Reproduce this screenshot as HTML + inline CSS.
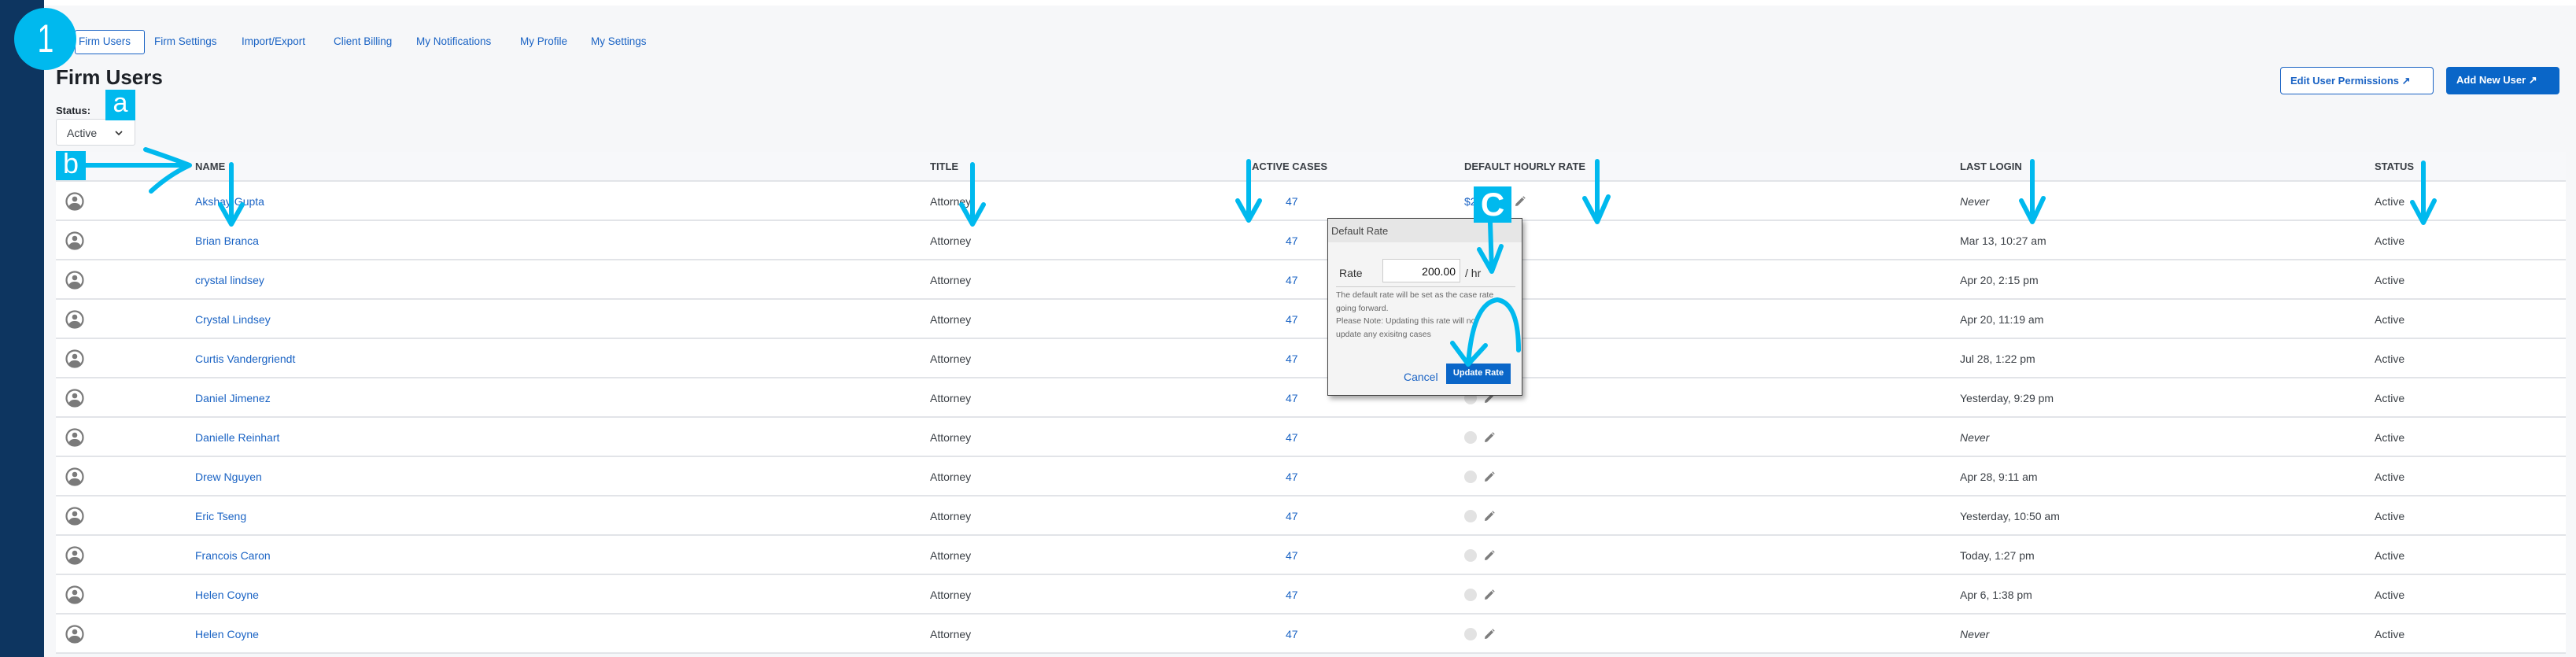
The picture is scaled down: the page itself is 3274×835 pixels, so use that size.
<!DOCTYPE html>
<html><head><meta charset="utf-8"><style>
*{margin:0;padding:0;box-sizing:border-box}
body{width:3274px;height:835px;background:#f6f7f9;font-family:"Liberation Sans",Arial,sans-serif;position:relative;overflow:hidden;color:#3a3f45}
.abs{position:absolute;white-space:nowrap}
.nav{top:45px;font-size:13.5px;color:#1a63c4}
.row{position:absolute;left:71px;width:3190px;height:50px;background:#fff;border-bottom:2px solid #e2e4e8}
.row .t{position:absolute;top:17px;font-size:14px;color:#3a3f45;white-space:nowrap}
.lnk{color:#1a63c4!important}
.hd{position:absolute;top:204px;font-size:13px;font-weight:bold;color:#3a3f45}
</style></head><body>
<div class="abs" style="left:0;top:0;width:3274px;height:7px;background:#fff"></div>
<div class="abs" style="left:0;top:0;width:56px;height:835px;background:#0d3560"></div>

<div class="abs" style="left:95px;top:38px;width:89px;height:31px;border:1px solid #1a63c4;border-radius:3px;background:#fff"></div>
<div class="abs nav" style="left:100px">Firm Users</div>
<div class="abs nav" style="left:196px">Firm Settings</div>
<div class="abs nav" style="left:307px">Import/Export</div>
<div class="abs nav" style="left:424px">Client Billing</div>
<div class="abs nav" style="left:529px">My Notifications</div>
<div class="abs nav" style="left:661px">My Profile</div>
<div class="abs nav" style="left:751px">My Settings</div>

<div class="abs" style="left:18px;top:10px;width:79px;height:79px;border-radius:50%;background:#00b9ee;color:#fff;font-size:50px;text-align:center;line-height:79px"><span style="display:inline-block;transform:scaleX(0.75)">1</span></div>

<div class="abs" style="left:71px;top:83px;font-size:26px;font-weight:bold;color:#1d2127">Firm Users</div>
<div class="abs" style="left:71px;top:133px;font-size:13px;font-weight:bold;color:#1d2127">Status:</div>
<div class="abs" style="left:71px;top:151px;width:101px;height:34px;border:1px solid #d6d9dd;border-radius:3px;background:#fff;font-size:14px;padding:9px 0 0 13px">Active<svg style="position:absolute;left:74px;top:13px" width="10" height="8" viewBox="0 0 10 8"><path d="M1 2 L5 6 L9 2" fill="none" stroke="#333" stroke-width="1.6"/></svg></div>
<div class="abs" style="left:134px;top:114px;width:38px;height:39px;background:#00b9ee;color:#fff;font-size:34px;text-align:center;line-height:34px">a</div>

<div class="abs" style="left:2898px;top:85px;width:195px;height:35px;border:1px solid #1a63c4;border-radius:4px;background:#fff;color:#1a63c4;font-size:13px;font-weight:bold;padding:9px 0 0 12px">Edit User Permissions &#8599;</div>
<div class="abs" style="left:3109px;top:85px;width:144px;height:35px;border-radius:4px;background:#0a66c8;color:#fff;font-size:13px;font-weight:bold;padding:9px 0 0 13px">Add New User &#8599;</div>

<div class="abs" style="left:71px;top:193px;width:3190px;height:38px;background:#f7f8fa;border-bottom:2px solid #e2e4e8"></div>
<div class="hd" style="left:248px">NAME</div>
<div class="hd" style="left:1182px">TITLE</div>
<div class="hd" style="left:1591px">ACTIVE CASES</div>
<div class="hd" style="left:1861px">DEFAULT HOURLY RATE</div>
<div class="hd" style="left:2491px">LAST LOGIN</div>
<div class="hd" style="left:3018px">STATUS</div>

<div id="rows"></div>
<script>
var d=[["Akshay Gupta","Never"],["Brian Branca","Mar 13, 10:27 am"],["crystal lindsey","Apr 20, 2:15 pm"],["Crystal Lindsey","Apr 20, 11:19 am"],["Curtis Vandergriendt","Jul 28, 1:22 pm"],["Daniel Jimenez","Yesterday, 9:29 pm"],["Danielle Reinhart","Never"],["Drew Nguyen","Apr 28, 9:11 am"],["Eric Tseng","Yesterday, 10:50 am"],["Francois Caron","Today, 1:27 pm"],["Helen Coyne","Apr 6, 1:38 pm"],["Helen Coyne","Never"]];
var h="";
var av='<svg style="position:absolute;left:12px;top:13px" width="24" height="24" viewBox="0 0 24 24"><circle cx="12" cy="12" r="10.5" fill="none" stroke="#7a7a7a" stroke-width="2.2"/><circle cx="12" cy="9" r="3.3" fill="#7a7a7a"/><path d="M4.5 18 Q7 13.5 12 14 Q17 13.5 19.5 18 Q16 22 12 22 Q8 22 4.5 18Z" fill="#7a7a7a"/></svg>';
var pen='<svg width="14" height="14" viewBox="0 0 14 14"><path d="M1 13 L1.5 10 L9.5 2 L12 4.5 L4 12.5Z M10.3 1.2 L11.2 0.3 L13.7 2.8 L12.8 3.7Z" fill="#7d7d7d"/></svg>';
d.forEach(function(r,i){
 var ll=r[1]=="Never"?'<i>Never</i>':r[1];
 var rate=i==0?'<span class="t lnk" style="left:1790px">$200.00</span><span style="position:absolute;left:1854px;top:18px">'+pen+'</span>':'<span style="position:absolute;left:1790px;top:17px;width:16px;height:16px;border-radius:50%;background:#e2e2e2"></span><span style="position:absolute;left:1815px;top:18px">'+pen+'</span>';
 h+='<div class="row" style="top:'+(231+i*50)+'px">'+av+'<span class="t lnk" style="left:177px">'+r[0]+'</span><span class="t" style="left:1111px">Attorney</span><span class="t lnk" style="left:1563px">47</span>'+rate+'<span class="t" style="left:2420px">'+ll+'</span><span class="t" style="left:2947px">Active</span></div>';
});
document.getElementById("rows").innerHTML=h;
</script>

<div class="abs" style="left:1687px;top:277px;width:248px;height:226px;background:#f4f4f4;border:1px solid #444;box-shadow:3px 4px 6px rgba(0,0,0,.35)">
 <div style="height:30px;background:#e6e6e6;font-size:13px;padding:8px 0 0 4px;color:#444">Default Rate</div>
 <div class="abs" style="left:14px;top:61px;font-size:14px;color:#333">Rate</div>
 <div class="abs" style="left:69px;top:51px;width:99px;height:30px;background:#fff;border:1px solid #ccc;font-size:14px;text-align:right;padding:7px 5px 0 0;color:#111">200.00</div>
 <div class="abs" style="left:174px;top:61px;font-size:14px;color:#333">/ hr</div>
 <div class="abs" style="left:10px;top:86px;width:228px;height:1px;background:#ccc"></div>
 <div class="abs" style="left:10px;top:89px;font-size:10.5px;line-height:16.7px;color:#666">The default rate will be set as the case rate<br>going forward.<br>Please Note: Updating this rate will not<br>update any exisitng cases</div>
 <div class="abs" style="left:96px;top:193px;font-size:14px;color:#1a63c4">Cancel</div>
 <div class="abs" style="left:150px;top:184px;width:82px;height:26px;background:#0a66c8;color:#fff;font-size:11px;font-weight:bold;text-align:center;line-height:24px">Update Rate</div>
</div>

<div class="abs" style="left:71px;top:192px;width:38px;height:37px;background:#00b9ee;color:#fff;font-size:36px;text-align:center;line-height:32px">b</div>
<div class="abs" style="left:1873px;top:237px;width:48px;height:46px;background:#00b9ee;color:#fff;font-size:42px;font-weight:bold;text-align:center;line-height:46px">C</div>

<svg class="abs" style="left:0;top:0" width="3274" height="835" fill="none" stroke="#00b9ee" stroke-width="6" stroke-linecap="round" stroke-linejoin="round">
 <path d="M109 210 L236 210 M185 190 Q215 200 241 210 Q215 222 192 243"/>
 <path d="M294 209 L294 285 M280 260 L294 285 L308 260"/>
 <path d="M1236 209 L1236 285 M1222 260 L1236 285 L1250 260"/>
 <path d="M1587 205 L1587 280 M1573 255 L1587 280 L1601 255"/>
 <path d="M2030 205 L2030 282 M2014 252 L2030 282 L2044 250"/>
 <path d="M2583 205 L2583 282 M2569 255 L2583 282 L2597 252"/>
 <path d="M3080 207 L3080 283 M3066 257 L3080 283 L3094 255"/>
 <path d="M1894 283 L1896 345 M1880 317 L1896 345 L1908 313"/>
 <path d="M1930 445 Q1930 385 1903 381 Q1872 385 1866 463 M1846 436 L1866 463 L1888 439"/>
</svg>
</body></html>
